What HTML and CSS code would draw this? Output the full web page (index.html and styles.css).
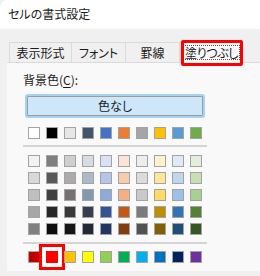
FILE: index.html
```html
<!DOCTYPE html>
<html lang="ja">
<head>
<meta charset="utf-8">
<link rel="stylesheet" href="styles.css">
</head>
<body>
<div class="window">
  <div class="titlebar">セルの書式設定</div>
  <div class="tabs">
    <div class="tab t1">表示形式</div>
    <div class="tab t2">フォント</div>
    <div class="tab t3">罫線</div>
    <div class="tab sel"><span class="focus">塗りつぶし</span></div>
  </div>
  <div class="panel">
    <div class="label">背景色(<u>C</u>):</div>
    <div class="btn">色なし</div>
    <div class="row">
      <i class="sw" style="background:#FFFFFF"></i><i class="sw" style="background:#000000"></i><i class="sw" style="background:#E7E6E6"></i><i class="sw" style="background:#44546A"></i><i class="sw" style="background:#4472C4"></i><i class="sw" style="background:#ED7D31"></i><i class="sw" style="background:#A5A5A5"></i><i class="sw" style="background:#FFC000"></i><i class="sw" style="background:#5B9BD5"></i><i class="sw" style="background:#70AD47"></i>
    </div>
    <div class="sep"></div>
    <div class="grid">
      <i class="sw" style="background:#F2F2F2"></i><i class="sw" style="background:#7F7F7F"></i><i class="sw" style="background:#D0CECE"></i><i class="sw" style="background:#D6DCE4"></i><i class="sw" style="background:#D9E1F2"></i><i class="sw" style="background:#FCE4D6"></i><i class="sw" style="background:#EDEDED"></i><i class="sw" style="background:#FFF2CC"></i><i class="sw" style="background:#DDEBF7"></i><i class="sw" style="background:#E2EFDA"></i>
      <i class="sw" style="background:#D9D9D9"></i><i class="sw" style="background:#595959"></i><i class="sw" style="background:#AEAAAA"></i><i class="sw" style="background:#ACB9CA"></i><i class="sw" style="background:#B4C6E7"></i><i class="sw" style="background:#F8CBAD"></i><i class="sw" style="background:#DBDBDB"></i><i class="sw" style="background:#FFE699"></i><i class="sw" style="background:#BDD7EE"></i><i class="sw" style="background:#C6E0B4"></i>
      <i class="sw" style="background:#BFBFBF"></i><i class="sw" style="background:#404040"></i><i class="sw" style="background:#757171"></i><i class="sw" style="background:#8497B0"></i><i class="sw" style="background:#8EA9DB"></i><i class="sw" style="background:#F4B084"></i><i class="sw" style="background:#C9C9C9"></i><i class="sw" style="background:#FFD966"></i><i class="sw" style="background:#9BC2E6"></i><i class="sw" style="background:#A9D08E"></i>
      <i class="sw" style="background:#A6A6A6"></i><i class="sw" style="background:#262626"></i><i class="sw" style="background:#3A3838"></i><i class="sw" style="background:#333F4F"></i><i class="sw" style="background:#305496"></i><i class="sw" style="background:#C65911"></i><i class="sw" style="background:#7B7B7B"></i><i class="sw" style="background:#BF8F00"></i><i class="sw" style="background:#2F75B5"></i><i class="sw" style="background:#548235"></i>
      <i class="sw" style="background:#808080"></i><i class="sw" style="background:#0D0D0D"></i><i class="sw" style="background:#161616"></i><i class="sw" style="background:#222B35"></i><i class="sw" style="background:#203764"></i><i class="sw" style="background:#833C0C"></i><i class="sw" style="background:#525252"></i><i class="sw" style="background:#806000"></i><i class="sw" style="background:#1F4E78"></i><i class="sw" style="background:#375623"></i>
    </div>
    <div class="sep sep2"></div>
    <div class="row last">
      <i class="sw" style="background:#C00000"></i><i class="sw chosen" style="background:#FF0000"></i><i class="sw" style="background:#FFC000"></i><i class="sw" style="background:#FFFF00"></i><i class="sw" style="background:#92D050"></i><i class="sw" style="background:#00B050"></i><i class="sw" style="background:#00B0F0"></i><i class="sw" style="background:#0070C0"></i><i class="sw" style="background:#002060"></i><i class="sw" style="background:#7030A0"></i>
    </div>
  </div>
</div>
</body>
</html>
```
FILE: styles.css
```css
html, body {
  margin: 0;
  padding: 0;
}
body {
  width: 260px;
  height: 276px;
  overflow: hidden;
  background: #f0f0f0;
  font-family: "Noto Sans CJK JP", "Noto Sans", sans-serif;
  color: #1a1a1a;
  font-feature-settings: "palt";
}
.window {
  height: 276px;
  background: #f0f0f0;
}
.titlebar {
  height: 29px;
  box-sizing: border-box;
  background: #ffffff;
  border-top-left-radius: 8px;
  padding-left: 8px;
  padding-top: 5px;
  font-size: 12px;
  line-height: 18px;
}
.tabs {
  display: flex;
  margin-top: 13px;
  padding-left: 9px;
  height: 20px;
  align-items: flex-end;
}
.tab {
  box-sizing: border-box;
  height: 20px;
  border: 1px solid #dadada;
  border-bottom: none;
  border-right: none;
  background: #f0f0f0;
  font-size: 12px;
  line-height: 19px;
  text-align: center;
  white-space: nowrap;
}
.t1 { width: 62px; }
.t2 { width: 54px; }
.t3 { width: 55px; border-right: 1px solid #dadada; }
.tab.sel {
  position: relative;
  width: 63px;
  height: 22px;
  margin-bottom: -1px;
  background: #f9f9f9;
  border: 1px solid #dadada;
  border-bottom: none;
  padding-top: 3px;
  line-height: 13px;
  z-index: 1;
}
.focus {
  display: inline-block;
  padding: 0 1px;
  letter-spacing: -0.4px;
  border: 1px dotted #555;
}
.tab.sel::after {
  content: "";
  position: absolute;
  left: 0;
  top: -2px;
  right: -1px;
  bottom: -3px;
  border: 3px solid #ff0000;
  border-radius: 2px;
}
.panel {
  margin-left: 7px;
  height: 209px;
  box-sizing: border-box;
  background: #f9f9f9;
  border-top: 1px solid #dadada;
  padding-top: 9px;
  padding-left: 21px;
}
.label {
  margin-left: -5px;
  font-size: 12px;
  line-height: 16px;
}
.label u {
  text-underline-offset: 2px;
}
.btn {
  margin-top: 8px;
  margin-left: -1px;
  width: 176px;
  height: 20px;
  box-sizing: border-box;
  background: #cde6f9;
  border: 1px solid #9c9c9c;
  border-radius: 1px;
  box-shadow: 0 0 0 2px #a6d2f5;
  font-size: 12px;
  line-height: 17px;
  text-align: center;
}
.row {
  display: flex;
  gap: 6px;
  margin-top: 11px;
}
.sw {
  display: block;
  width: 10px;
  height: 10px;
  border: 1px solid #a3a3a3;
  flex: none;
}
.sep {
  margin-top: 6px;
  margin-left: -5px;
  width: 184px;
  height: 2px;
  background: #d4d4d4;
}
.grid {
  display: grid;
  grid-template-columns: repeat(10, 12px);
  column-gap: 6px;
  row-gap: 5px;
  margin-top: 8px;
}
.sep2 {
  margin-top: 7px;
}
.row.last {
  margin-top: 7px;
}
.sw.chosen {
  border-color: #ff0000;
  box-shadow: 0 0 0 4px #ffffff, 0 0 0 7px #ff0000;
}
```
